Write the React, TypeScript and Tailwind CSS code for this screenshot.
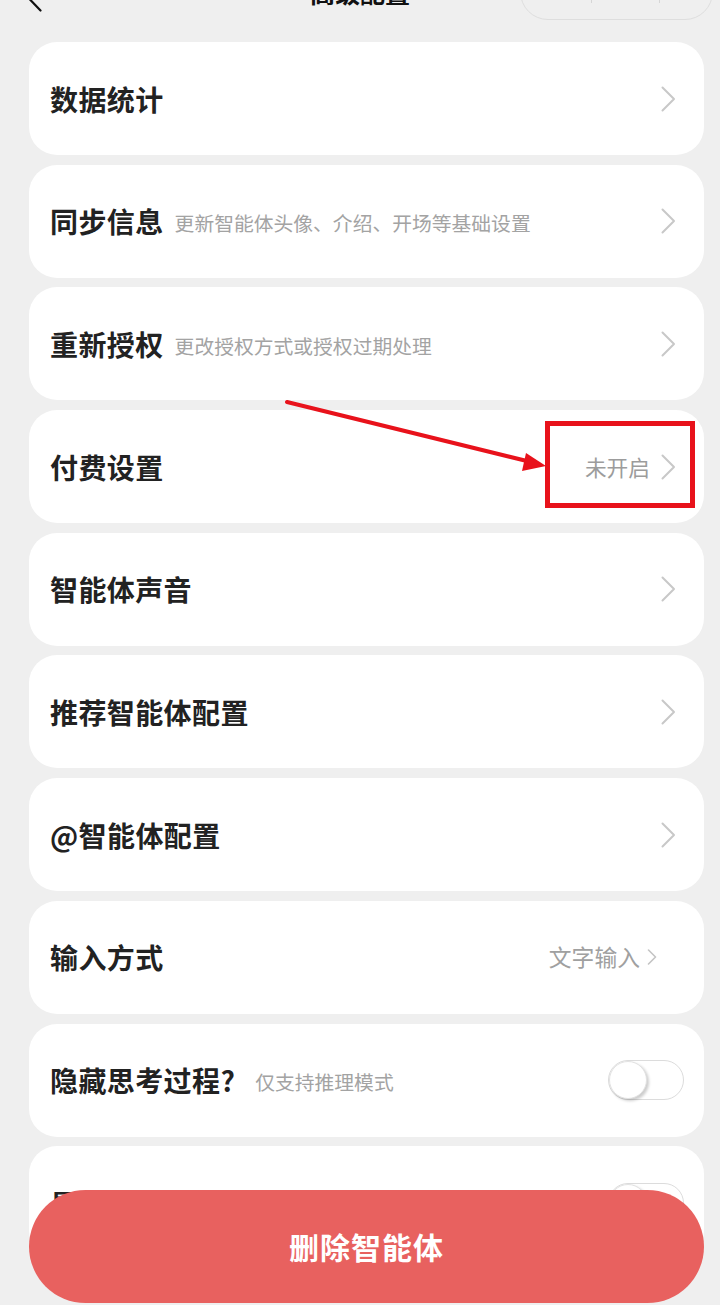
const Chevron = ({ small = false }: { small?: boolean }) =>
  small ? (
    <svg width="10" height="16" viewBox="0 0 10 16" fill="none" className="shrink-0">
      <polyline points="1.5,1 8.5,8 1.5,15" stroke="#c4c4c4" strokeWidth="1.6" strokeLinecap="round" strokeLinejoin="round" />
    </svg>
  ) : (
    <svg width="15" height="26" viewBox="0 0 15 26" fill="none" className="shrink-0">
      <polyline points="1.5,1.5 13,13 1.5,24.5" stroke="#c8c8c8" strokeWidth="2" strokeLinecap="round" strokeLinejoin="round" />
    </svg>
  );

const Toggle = () => (
  <div className="relative w-[76px] h-[40px] rounded-full bg-white border border-[#dcdcdc]">
    <div className="absolute left-0 top-0 w-[38px] h-[38px] rounded-full bg-white shadow-[2px_2px_3px_rgba(0,0,0,0.2)] border border-[#e2e2e2]" />
  </div>
);

type Row = {
  title: string;
  desc?: string;
  value?: string;
  toggle?: boolean;
};

const rows: Row[] = [
  { title: '数据统计' },
  { title: '同步信息', desc: '更新智能体头像、介绍、开场等基础设置' },
  { title: '重新授权', desc: '更改授权方式或授权过期处理' },
  { title: '付费设置', value: '未开启' },
  { title: '智能体声音' },
  { title: '推荐智能体配置' },
  { title: '@智能体配置' },
  { title: '输入方式', value: '文字输入' },
  { title: '隐藏思考过程?', desc: '仅支持推理模式', toggle: true },
  { title: '显示引用来源', toggle: true },
];

const App = () => {
  return (
    <div
      className="relative w-[720px] h-[1305px] overflow-hidden bg-[#efefef]"
      style={{ fontFamily: '"Noto Sans CJK SC", "Noto Sans", sans-serif' }}
    >
      {/* Nav bar, mostly scrolled off the top */}
      <div className="relative -mt-[44px] h-[72px] flex items-center pl-[28px] pr-[7px]">
        <svg width="14" height="26" viewBox="0 0 14 26" fill="none" className="mt-[14px]">
          <polyline points="12.5,1.5 1.5,13 12.5,24.5" stroke="#111" strokeWidth="2.2" strokeLinecap="round" strokeLinejoin="round" />
        </svg>
        <div className="absolute left-0 right-0 top-[24px] text-center text-[25px] font-semibold text-[#111] leading-none pointer-events-none">
          高级配置
        </div>
        <div className="ml-auto mt-[0px] w-[193px] h-[56px] rounded-full border border-[#dedede] flex items-center">
          <div className="w-[70px]" />
          <div className="w-px h-[28px] bg-[#d6d6d6] self-start mt-[10px]" />
          <div className="w-[67px]" />
          <div className="w-px h-[28px] bg-[#d6d6d6] self-start mt-[10px]" />
          <div className="ml-[18px] w-[28px] h-[28px] rounded-full border-[3px] border-[#555] -mt-[14px]" />
        </div>
      </div>

      {/* Settings list */}
      <div className="mt-[14px] pl-[29px] pr-[16px] flex flex-col gap-[9.7px]">
        {rows.map((row) => (
          <div
            key={row.title}
            className={`h-[113px] shrink-0 rounded-[28px] bg-white flex items-center pl-[21px] ${row.toggle ? 'pr-[20px]' : 'pr-[28px]'}`}
          >
            <span className="text-[28px] font-semibold text-[#222] leading-none tracking-[0.4px]">{row.title}</span>
            {row.desc && (
              <span className={`${row.toggle ? 'ml-[20px]' : 'ml-[11px]'} text-[19.8px] text-[#a3a3a3] leading-none mt-[4px]`}>
                {row.desc}
              </span>
            )}
            <div className="ml-auto flex items-center">
              {row.toggle ? (
                <Toggle />
              ) : row.value === '文字输入' ? (
                <div className="flex items-center gap-[7px] mr-[19px]">
                  <span className="text-[22.8px] text-[#a0a0a0] leading-none">{row.value}</span>
                  <Chevron small />
                </div>
              ) : row.value ? (
                <div className="flex items-center gap-[11px]">
                  <span className="text-[21.7px] text-[#9c9c9c] leading-none">{row.value}</span>
                  <Chevron />
                </div>
              ) : (
                <Chevron />
              )}
            </div>
          </div>
        ))}
      </div>

      {/* Annotation overlay */}
      <svg className="absolute left-0 top-0 pointer-events-none" width="720" height="1305" viewBox="0 0 720 1305">
        <line x1="287" y1="402" x2="531" y2="462" stroke="#e8121b" strokeWidth="4" strokeLinecap="round" />
        <polygon points="546,466 526,453 522,471" fill="#e8121b" />
        <rect x="547.5" y="423.5" width="145" height="82" fill="none" stroke="#e8121b" strokeWidth="5" />
      </svg>

      {/* Bottom action */}
      <button className="absolute left-[29px] top-[1190px] w-[675px] h-[113px] rounded-full bg-[#e8615f] text-white text-[30px] font-bold tracking-[1px]">
        删除智能体
      </button>
    </div>
  );
};

export default App;
